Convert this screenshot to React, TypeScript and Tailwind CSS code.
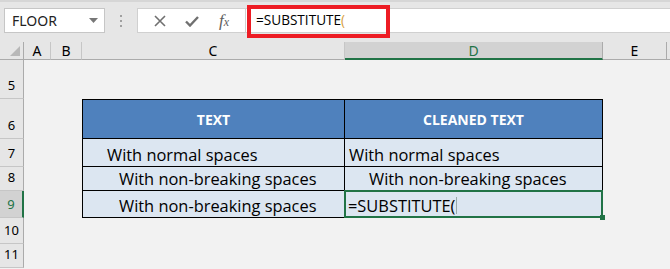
import React from 'react';

const font = { fontFamily: '"Open Sans", "Noto Sans", sans-serif' };

function RowHead({ n, active }: { n: string; active?: boolean }) {
  return (
    <div
      className={
        'flex items-end justify-center pb-[3px] text-[13px] border-b border-[#c6c6c6] ' +
        (active ? 'bg-[#d2d2d2] text-[#217346] border-r-2 border-r-[#217346]' : 'bg-[#e6e6e6] text-black border-r border-r-[#ababab]')
      }
    >
      {n}
    </div>
  );
}

function Blank({ cols }: { cols: number }) {
  return <div className="bg-[#f2f2f2]" style={{ gridColumn: `span ${cols}` }} />;
}

export default function App() {
  return (
    <div className="w-[670px] h-[269px] overflow-hidden bg-[#f2f2f2] flex flex-col" style={{ fontFamily: '"Segoe UI", "Noto Sans", sans-serif' }}>
      {/* formula bar */}
      <div className="relative h-[42px] bg-[#e6e6e6] border-t-2 border-[#d6d6d6] flex items-start pt-[6px]">
        <div className="ml-[4px] w-[101px] h-[25px] bg-white border border-[#c6c6c6] flex items-center justify-between pl-[7px] pr-[6px]">
          <span className="text-[14px] text-[#222]">FLOOR</span>
          <svg width="9" height="6" viewBox="0 0 9 6"><path d="M0 0h9L4.5 5z" fill="#777" /></svg>
        </div>
        <div className="w-[32px] h-[25px] flex flex-col items-center justify-center gap-[3px]">
          <span className="w-[2px] h-[2px] bg-[#a0a0a0]" />
          <span className="w-[2px] h-[2px] bg-[#a0a0a0]" />
          <span className="w-[2px] h-[2px] bg-[#a0a0a0]" />
        </div>
        <div className="w-[109px] h-[25px] bg-white border border-[#d0d0d0] flex items-center justify-around px-[6px]">
          <svg width="12" height="12" viewBox="0 0 12 12"><path d="M1 1l10 10M11 1L1 11" stroke="#707070" strokeWidth="1.6" /></svg>
          <svg width="14" height="12" viewBox="0 0 14 12"><path d="M1 6.5l4 4L13 2" stroke="#707070" strokeWidth="2.4" fill="none" /></svg>
          <span className="text-[#606060] text-[17px] italic" style={{ fontFamily: '"Liberation Serif", serif' }}>f<span className="text-[12px]">x</span></span>
        </div>
        <div className="flex-1 h-[25px] bg-white border-y border-[#d0d0d0] flex items-center pl-[10px]">
          <span className="text-[13.6px] text-black" style={font}>=SUBSTITUTE<span className="text-[#d8a040]">(</span></span>
        </div>
        <div className="absolute left-[247px] top-[3px] w-[143px] h-[33px] border-[4px] border-[#ed1c24]" />
      </div>

      {/* sheet grid */}
      <div
        className="grid"
        style={{
          gridTemplateColumns: '24px 27px 31px 263px 258px 64px 3px',
          gridTemplateRows: '18px 39px 40px 28px 24px 27px 26px 24px 1px',
        }}
      >
        {/* column headers */}
        <div className="bg-[#e6e6e6] border-b border-[#ababab] border-r border-r-[#ababab] flex items-end justify-end p-[3px]">
          <svg width="10" height="10" viewBox="0 0 10 10"><path d="M10 0v10H0z" fill="#b8b8b8" /></svg>
        </div>
        <div className="bg-[#e6e6e6] border-b border-[#ababab] border-r border-r-[#c6c6c6] text-[14px] flex items-center justify-center">A</div>
        <div className="bg-[#e6e6e6] border-b border-[#ababab] border-r border-r-[#c6c6c6] text-[14px] flex items-center justify-center">B</div>
        <div className="bg-[#e6e6e6] border-b border-[#ababab] border-r border-r-[#c6c6c6] text-[14px] flex items-center justify-center">C</div>
        <div className="bg-[#d2d2d2] border-b-2 border-[#217346] border-r border-r-[#ababab] text-[14px] text-[#217346] flex items-center justify-center">D</div>
        <div className="bg-[#e6e6e6] border-b border-[#ababab] border-r border-r-[#ababab] text-[14px] flex items-center justify-center">E</div>
        <div className="bg-[#e6e6e6] border-b border-[#ababab]" />

        {/* row 5 */}
        <RowHead n="5" />
        <Blank cols={6} />

        {/* row 6 header */}
        <RowHead n="6" />
        <Blank cols={2} />
        <div className="bg-[#4f81bd] border border-black text-white font-bold text-[14px] flex items-center justify-center" style={font}>TEXT</div>
        <div className="bg-[#4f81bd] border-y border-r border-black text-white font-bold text-[14px] flex items-center justify-center" style={font}>CLEANED TEXT</div>
        <Blank cols={2} />

        {/* row 7 */}
        <RowHead n="7" />
        <Blank cols={2} />
        <div className="bg-[#dce6f1] border-x border-b border-black text-[16.4px] leading-[22px] flex items-end pl-[24px]" style={font}>With normal spaces</div>
        <div className="bg-[#dce6f1] border-r border-b border-black text-[16.4px] leading-[22px] flex items-end pl-[4px]" style={font}>With normal spaces</div>
        <Blank cols={2} />

        {/* row 8 */}
        <RowHead n="8" />
        <Blank cols={2} />
        <div className="bg-[#dce6f1] border-x border-b border-black text-[16.4px] leading-[22px] flex items-end pl-[36px]" style={font}>With non-breaking spaces</div>
        <div className="bg-[#dce6f1] border-r border-b border-black text-[16.4px] leading-[22px] flex items-end pl-[24px]" style={font}>With non-breaking spaces</div>
        <Blank cols={2} />

        {/* row 9 */}
        <RowHead n="9" active />
        <Blank cols={2} />
        <div className="bg-[#dce6f1] border-x border-b border-black text-[16.4px] leading-[22px] flex items-end pl-[36px]" style={font}>With non-breaking spaces</div>
        <div className="relative bg-[#dce6f1] border-r border-b border-black text-[16.4px] leading-[22px] flex items-end pl-[3px]" style={font}>
          <span>=SUBSTITUTE(</span>
          <span className="ml-[1px] mb-[3px] w-px h-[17px] bg-[#9aa]" />
          <div className="absolute left-[-1px] top-[-1px] right-[-1px] bottom-[-1px] border-2 border-[#217346]" />
          <div className="absolute right-[-3px] bottom-[-3px] w-[5px] h-[5px] bg-[#217346]" />
        </div>
        <Blank cols={2} />

        {/* rows 10, 11 */}
        <RowHead n="10" />
        <Blank cols={6} />
        <RowHead n="11" />
        <Blank cols={6} />
      </div>
    </div>
  );
}
